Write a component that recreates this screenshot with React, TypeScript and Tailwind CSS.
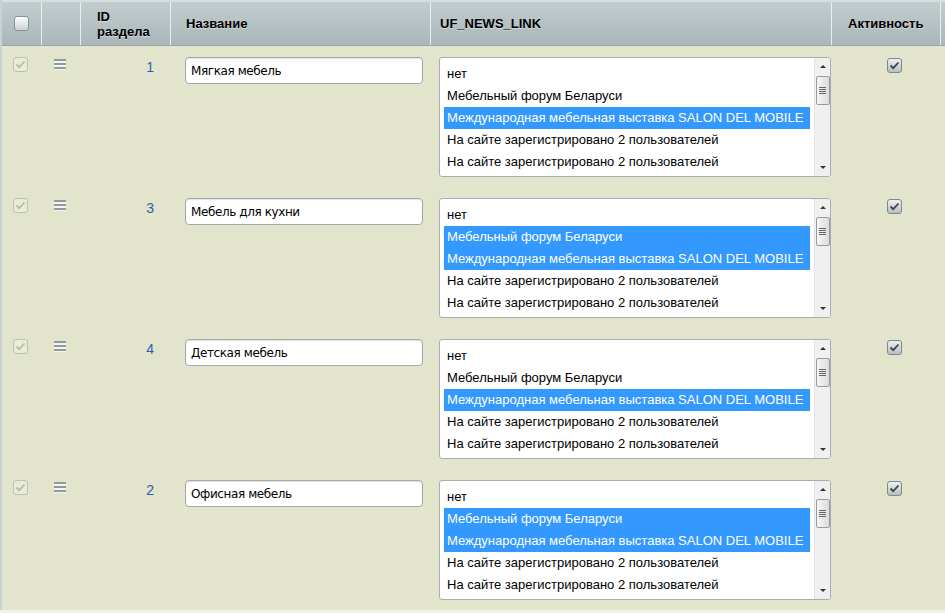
import React from 'react'

const OPTIONS = [
  'нет',
  'Мебельный форум Беларуси',
  'Международная мебельная выставка SALON DEL MOBILE',
  'На сайте зарегистрировано 2 пользователей',
  'На сайте зарегистрировано 2 пользователей',
]

const ROWS = [
  { id: 1, name: 'Мягкая мебель', selected: [2] },
  { id: 3, name: 'Мебель для кухни', selected: [1, 2] },
  { id: 4, name: 'Детская мебель', selected: [2] },
  { id: 2, name: 'Офисная мебель', selected: [1, 2] },
]

const COLS = 'grid grid-cols-[39px_39px_90px_260px_401px_109px_1fr]'

function Check({ color }: { color: string }) {
  return (
    <svg width="13" height="13" viewBox="0 0 13 13" className="block">
      <polyline points="2.5,6.5 5.2,9.2 10.5,3.5" fill="none" stroke={color} strokeWidth="1.8" />
    </svg>
  )
}

function HeaderCheckbox() {
  return (
    <div className="w-[15px] h-[15px] rounded-[3px] border border-[#8a9094] bg-gradient-to-b from-[#ffffff] to-[#cdd2d5] shadow-[inset_0_1px_0_#fff]" />
  )
}

function DisabledCheckbox() {
  return (
    <div className="w-[15px] h-[15px] rounded-[3px] border border-[#bcc0ae] bg-[#e8ebd6] flex items-center justify-center">
      <Check color="#b9bdab" />
    </div>
  )
}

function ActiveCheckbox() {
  return (
    <div className="w-[15px] h-[15px] rounded-[3px] border border-[#80878b] bg-gradient-to-b from-[#eef0f1] to-[#b7bfc2] flex items-center justify-center">
      <Check color="#3d4548" />
    </div>
  )
}

function DragHandle() {
  return (
    <div className="w-[12px] flex flex-col">
      <div className="h-[2px] bg-[#8e9a9c]" />
      <div className="h-[2px] bg-[#f4f5ee]" />
      <div className="h-[2px] bg-[#8e9a9c]" />
      <div className="h-[2px] bg-[#f4f5ee]" />
      <div className="h-[2px] bg-[#8e9a9c]" />
      <div className="h-[1px] bg-[#f4f5ee]" />
    </div>
  )
}

function FakeScrollbar() {
  return (
    <div className="w-[16px] bg-[#f0f0f0] border-l border-[#e4e4e4] flex flex-col items-center">
      <div className="h-[7px]" />
      <div className="w-0 h-0 border-l-[3px] border-r-[3px] border-b-[3px] border-l-transparent border-r-transparent border-b-[#333]" />
      <div className="h-[8px]" />
      <div className="w-[14px] h-[29px] rounded-[2px] border border-[#9a9a9a] bg-gradient-to-r from-[#f6f6f6] to-[#dcdcdc] flex flex-col items-center justify-center gap-[1px]">
        <div className="w-[7px] h-[1px] bg-[#666]" />
        <div className="w-[7px] h-[1px] bg-[#666]" />
        <div className="w-[7px] h-[1px] bg-[#666]" />
        <div className="w-[7px] h-[1px] bg-[#666]" />
      </div>
      <div className="flex-1" />
      <div className="w-0 h-0 border-l-[3px] border-r-[3px] border-t-[3px] border-l-transparent border-r-transparent border-t-[#333]" />
      <div className="h-[7px]" />
    </div>
  )
}

function ListBox({ selected }: { selected: number[] }) {
  return (
    <div className="w-[392px] h-[120px] rounded-[3px] border border-[#a9adb0] bg-white flex overflow-hidden">
      <div className="flex-1 pt-[5px] px-[4px] font-['Liberation_Sans',Arial,sans-serif] text-[13px]">
        {OPTIONS.map((o, i) => (
          <div
            key={i}
            className={
              'h-[22px] leading-[22px] pl-[3px] whitespace-nowrap ' +
              (selected.includes(i) ? 'bg-[#3399ff] text-white' : 'text-black')
            }
          >
            {o}
          </div>
        ))}
      </div>
      <FakeScrollbar />
    </div>
  )
}

export default function App() {
  return (
    <div className="w-[945px] h-[613px] overflow-hidden bg-[#eef0ec]">
      <div className="w-[962px] border-l-2 border-[#c7d2d6]">
        <div
          className={
            COLS +
            " h-[46px] border-t-2 border-[#d9e0e2] border-b border-b-[#98a5a8] bg-gradient-to-b from-[#c3cdd0] to-[#aab6b9] font-['Liberation_Sans',Arial,sans-serif] text-[13px] font-bold text-black [text-shadow:0_1px_0_rgba(255,255,255,0.45)]"
          }
        >
          <div className="flex items-center pl-[12px]">
            <HeaderCheckbox />
          </div>
          <div className="border-l border-[#e9eef0]" />
          <div className="border-l border-[#e9eef0] flex items-center pl-[16px] leading-[15px]">
            ID
            <br />
            раздела
          </div>
          <div className="border-l border-[#e9eef0] flex items-center pl-[15px]">Название</div>
          <div className="border-l border-[#e9eef0] flex items-center pl-[9px]">UF_NEWS_LINK</div>
          <div className="border-l border-[#e9eef0] flex items-center pl-[16px]">Активность</div>
          <div className="border-l border-[#e9eef0]" />
        </div>

        {ROWS.map((r) => (
          <div key={r.id} className={COLS + ' h-[141px] bg-[#e2e5cb]'}>
            <div className="pt-[11px] pl-[11px]">
              <DisabledCheckbox />
            </div>
            <div className="pt-[13px] pl-[13px]">
              <DragHandle />
            </div>
            <div className="pt-[11px] pr-[16px] text-right font-['Liberation_Sans',Arial,sans-serif] text-[14px] leading-[20px] text-[#2a5db0]">
              {r.id}
            </div>
            <div className="pt-[11px] pl-[15px]">
              <div className="w-[238px] h-[27px] rounded-[4px] border border-[#a4a8aa] bg-white shadow-[inset_0_1px_1px_rgba(0,0,0,0.12)] flex items-center pl-[5px] font-['DejaVu_Sans',Tahoma,sans-serif] text-[12px] tracking-[-0.4px] text-black">
                {r.name}
              </div>
            </div>
            <div className="pt-[11px] pl-[9px]">
              <ListBox selected={r.selected} />
            </div>
            <div className="pt-[12px] pl-[56px]">
              <ActiveCheckbox />
            </div>
            <div />
          </div>
        ))}
      </div>
    </div>
  )
}
